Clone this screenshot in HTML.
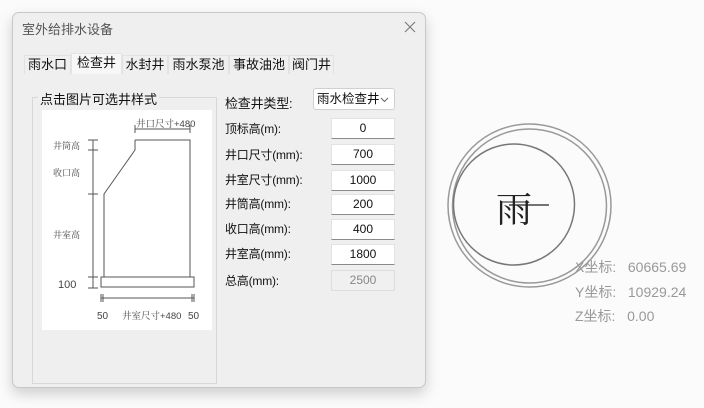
<!DOCTYPE html>
<html><head><meta charset="utf-8"><style>
*{margin:0;padding:0;box-sizing:border-box}
body{width:704px;height:408px;background:#fbfbfb;font-family:"Liberation Sans","Noto Sans CJK SC",sans-serif;position:relative;overflow:hidden;color:#111}
.dlg{position:absolute;left:12px;top:12px;width:414px;height:376px;background:#efefef;border:1px solid #c8c8c8;border-radius:7px;box-shadow:0 6px 14px rgba(0,0,0,.18)}
.t{position:absolute;font-size:13px;white-space:nowrap}
.tab{position:absolute;top:42px;height:19px;border:1px solid #e2e2e2;border-bottom:none;font-size:13px;line-height:18px;text-align:center;background:#efefef}
.tab.sel{top:40px;height:21px;background:#f7f7f7;border-color:#e4e4e4}
.inp{position:absolute;left:318px;width:64px;height:21px;background:#fff;border:1px solid #e2e2e2;border-bottom:1px solid #8a8a8a;font-size:12px;text-align:center;line-height:19px}
.lbl{position:absolute;left:212px;font-size:12px;letter-spacing:-0.2px}
</style></head><body>
<div class="dlg">
<div class="t" style="left:9px;top:6px;color:#555;font-size:13px">室外给排水设备</div>
<svg style="position:absolute;left:391px;top:8px" width="12" height="12"><path d="M1 1L11 11M11 1L1 11" stroke="#777" stroke-width="1.1"/></svg>
<div class="tab" style="left:11px;width:47px">雨水口</div>
<div class="tab sel" style="left:58px;width:51px">检查井</div>
<div class="tab" style="left:109px;width:46px">水封井</div>
<div class="tab" style="left:155px;width:61px">雨水泵池</div>
<div class="tab" style="left:216px;width:60px">事故油池</div>
<div class="tab" style="left:276px;width:45px">阀门井</div>
<div style="position:absolute;left:19px;top:84px;width:185px;height:287px;border:1px solid #d8d8d8"></div>
<div class="t" style="left:25px;top:76px;background:#efefef;padding:0 2px">点击图片可选井样式</div>
<svg style="position:absolute;left:29px;top:97px" width="170" height="220" viewBox="41 109 170 220">
<rect x="41" y="109" width="170" height="220" fill="#fff"/>
<g stroke="#555" stroke-width="1" fill="none">
<path d="M134 139H189V276M103 276V193L134 149V139"/>
<rect x="100" y="276" width="93" height="10"/>
<path d="M92 139V287M87 139H97M87 149H97M87 193H97M87 276H97M87 287H97"/>
<path d="M134 128H189M134 124V132M189 124V132"/>
<path d="M100 297H193M100 293V301M102 293V301M191 293V301M193 293V301"/>
</g>
<g fill="#444" font-size="9" font-family="Liberation Sans,Noto Serif CJK SC,serif">
<text x="52" y="148">井筒高</text><text x="52" y="175">收口高</text><text x="52" y="237">井室高</text>
<text x="57" y="287" font-size="11">100</text>
<text x="135" y="126" font-size="9.5">井口尺寸+480</text>
<text x="96" y="318" font-size="10">50</text><text x="121" y="318" font-size="9.5">井室尺寸+480</text><text x="187" y="318" font-size="10">50</text>
</g></svg>
<div class="lbl" style="top:80px;font-size:13px">检查井类型:</div>
<div style="position:absolute;left:300px;top:75px;width:82px;height:22px;background:#fff;border:1px solid #d0d0d0;border-radius:3px;font-size:12.5px;line-height:20px;padding-left:3px">雨水检查井<svg style="position:absolute;right:5px;top:8px" width="9" height="6"><path d="M1 1L4.5 4.5L8 1" stroke="#666" fill="none"/></svg></div>
<div class="lbl" style="top:107px">顶标高(m):</div><div class="inp" style="top:105px">0</div>
<div class="lbl" style="top:133px">井口尺寸(mm):</div><div class="inp" style="top:131px">700</div>
<div class="lbl" style="top:158px">井室尺寸(mm):</div><div class="inp" style="top:157px">1000</div>
<div class="lbl" style="top:182px">井筒高(mm):</div><div class="inp" style="top:181px">200</div>
<div class="lbl" style="top:207px">收口高(mm):</div><div class="inp" style="top:206px">400</div>
<div class="lbl" style="top:232px">井室高(mm):</div><div class="inp" style="top:231px">1800</div>
<div class="lbl" style="top:259px">总高(mm):</div><div class="inp" style="top:257px;background:#f0f0f0;border:1px solid #ddd;color:#888">2500</div>
</div>
<svg style="position:absolute;left:0;top:0" width="704" height="408">
<g fill="none" stroke="#999" stroke-width="1.5"><circle cx="529.5" cy="205.5" r="81.5"/><circle cx="529.5" cy="206" r="77"/></g>
<circle cx="514" cy="204.5" r="60.5" fill="none" stroke="#777" stroke-width="1.5"/>
<text x="496" y="222" font-size="36" font-family="Noto Serif CJK SC,serif" fill="#222">雨</text>
<path d="M509 205H549" stroke="#222" stroke-width="1.2"/>
</svg>
<div class="t" style="left:575px;top:257px;color:#999;font-size:14px">X坐标:&nbsp;&nbsp;&nbsp;60665.69</div>
<div class="t" style="left:575px;top:282px;color:#999;font-size:14px">Y坐标:&nbsp;&nbsp;&nbsp;10929.24</div>
<div class="t" style="left:575px;top:306px;color:#999;font-size:14px">Z坐标:&nbsp;&nbsp;&nbsp;0.00</div>
</body></html>
